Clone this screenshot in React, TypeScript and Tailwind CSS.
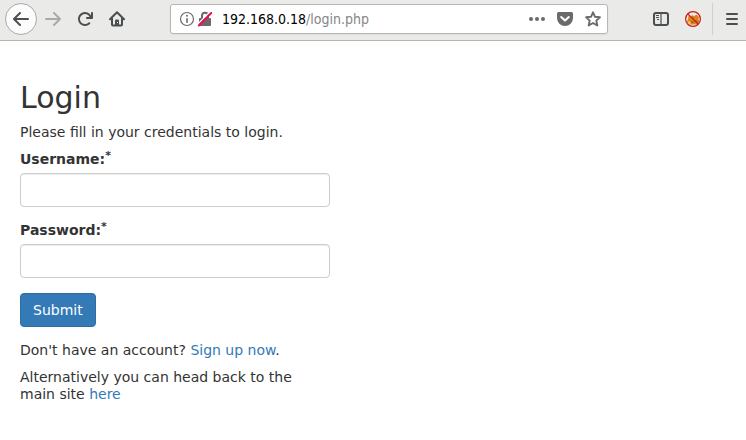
import type { ReactNode } from "react";

type IconProps = { children: ReactNode; className?: string };

function Icon({ children, className = "" }: IconProps) {
  return (
    <svg viewBox="0 0 16 16" width="16" height="16" fill="currentColor" aria-hidden="true" className={`shrink-0 ${className}`}>
      {children}
    </svg>
  );
}

type ToolButtonProps = { label: string; children: ReactNode; round?: boolean; disabled?: boolean };

function ToolButton({ label, children, round = false, disabled = false }: ToolButtonProps) {
  return (
    <button
      type="button"
      aria-label={label}
      disabled={disabled}
      className={`flex size-8 shrink-0 items-center justify-center ${
        round ? "rounded-full border border-[#a9a9a7] bg-[#fcfcfc]" : ""
      } ${disabled ? "text-[#a9abab]" : "text-[#4a4f51]"}`}
    >
      {children}
    </button>
  );
}

const BACK =
  "M15 7H3.414l4.293-4.293a1 1 0 0 0-1.414-1.414l-6 6a1 1 0 0 0 0 1.414l6 6a1 1 0 0 0 1.414-1.414L3.414 9H15a1 1 0 0 0 0-2z";

function Toolbar() {
  return (
    <header className="flex items-start border-b border-[#b4b4b2] bg-[#eaeae8] pb-[5px] pl-[5px] pt-[3px]">
      <ToolButton label="Back" round>
        <Icon><path d={BACK} /></Icon>
      </ToolButton>
      <ToolButton label="Forward" disabled>
        <Icon><path d={BACK} transform="matrix(-1 0 0 1 16 0)" /></Icon>
      </ToolButton>
      <ToolButton label="Reload">
        <Icon>
          <path d="M15 1a1 1 0 0 0-1 1v2.418A6.995 6.995 0 1 0 8 15a6.954 6.954 0 0 0 4.95-2.05 1 1 0 0 0-1.414-1.414A5.019 5.019 0 1 1 12.549 6H10a1 1 0 0 0 0 2h5a1 1 0 0 0 1-1V2a1 1 0 0 0-1-1z" />
        </Icon>
      </ToolButton>
      <ToolButton label="Home">
        <Icon>
          <path d="M1 8.2 8 1.3l7 6.9M3 7v6.500a1 1 0 0 0 1 1h8a1 1 0 0 0 1-1V7" fill="none" stroke="currentColor" strokeWidth="2" strokeLinecap="round" strokeLinejoin="round" />
          <path d="M6 14V9.500a1 1 0 0 1 1-1h2a1 1 0 0 1 1 1V14z" />
          <rect x="8" y="11" width="1" height="1" fill="#eaeae8" />
        </Icon>
      </ToolButton>

      <div className="ml-[37px] mt-px flex h-[30px] min-w-0 flex-1 items-center rounded-[3px] border border-[#b6b6b4] bg-white pl-2 pr-1.5 text-[#6a6a6a] shadow-xs">
        <button type="button" aria-label="Site information" className="flex items-center gap-0.5">
          <Icon>
            <circle cx="8" cy="8" r="6.500" fill="none" stroke="currentColor" strokeWidth="1.200" />
            <circle cx="8" cy="4.800" r="1" />
            <rect x="7.200" y="7" width="1.600" height="5" rx="0.800" />
          </Icon>
          <Icon>
            <path d="M5 8V4.800a3 3 0 0 1 6 0V8" fill="none" stroke="currentColor" strokeWidth="2" />
            <rect x="2" y="7" width="12" height="8" rx="1" />
            <path d="M1 13 13 1" stroke="#fff" strokeWidth="1.500" />
            <path d="M1.800 14.500 14.200 2" stroke="#ed0b50" strokeWidth="2" strokeLinecap="round" />
          </Icon>
        </button>
        <a href="#login" className="ml-[9px] min-w-0 flex-1 truncate font-['DejaVu_Sans_Condensed','DejaVu_Sans',sans-serif] text-[14px] leading-5 text-[#858585]">
          <span className="text-black">192.168.0.18</span>/login.php
        </a>
        <div className="flex items-center gap-3">
          <button type="button" aria-label="Page actions">
            <Icon>
              <circle cx="2" cy="8" r="2" />
              <circle cx="8" cy="8" r="2" />
              <circle cx="14" cy="8" r="2" />
            </Icon>
          </button>
          <button type="button" aria-label="Save to Pocket">
            <Icon>
              <path d="M1.600 1h12.800A1.600 1.600 0 0 1 16 2.600V7A8 8 0 0 1 0 7V2.600A1.600 1.600 0 0 1 1.600 1z" />
              <path d="m4.200 6 3.800 3.600L11.800 6" fill="none" stroke="#fff" strokeWidth="2" strokeLinecap="round" strokeLinejoin="round" />
            </Icon>
          </button>
          <button type="button" aria-label="Bookmark this page">
            <Icon>
              <path d="m8 1.300 2 4.500 4.900.5-3.600 3.300 1 4.900L8 12l-4.300 2.500 1-4.900L1.100 6.300 6 5.800z" fill="none" stroke="currentColor" strokeWidth="1.900" strokeLinejoin="round" />
            </Icon>
          </button>
        </div>
      </div>

      <div className="ml-[37px] flex">
        <ToolButton label="Sidebars">
          <Icon>
            <rect x="1" y="2" width="14" height="12" rx="2" fill="none" stroke="currentColor" strokeWidth="2" />
            <path d="M8 2v12" stroke="currentColor" strokeWidth="1.200" />
            <path d="M3 4.500h3M3 6.500h3M4 8.500h2" stroke="currentColor" strokeWidth="1" />
          </Icon>
        </ToolButton>
        <ToolButton label="Proxy disabled">
          <Icon>
            <path d="M1.500 11 3 8.500 3.500 4.500l2.500 1L7.500 4 9 5.200 11.500 3.500 14 6l-.5 2 1 3-2.500 2.500H5z" fill="#dc8418" />
            <path d="m6 10.500 2 1 2-2 2.500 1M7.500 6.500l1.500 1" fill="none" stroke="#8a5216" strokeWidth="1" />
            <path d="m2.500 11 2-1 1.500 2.500-2 .5z" fill="#f4c879" />
            <circle cx="8" cy="8" r="7.400" fill="none" stroke="#cf1717" strokeWidth="1.200" />
            <path d="m2.800 2.800 10.400 10.400" stroke="#cf1717" strokeWidth="1.200" />
          </Icon>
        </ToolButton>
      </div>
      <div className="ml-[3px] flex border-l border-[#d0d0ce] pl-[3px] -mr-0.5">
        <ToolButton label="Open menu">
          <Icon>
            <path d="M3 3h10M3 8h10M3 13h10" stroke="currentColor" strokeWidth="2" strokeLinecap="round" />
          </Icon>
        </ToolButton>
      </div>
    </header>
  );
}

function Field({ id, label, type }: { id: string; label: string; type: string }) {
  return (
    <div className="mb-[15px]">
      <label htmlFor={id} className="mb-[5px] block font-bold">
        {label}
        <sup className="text-[11px]">*</sup>
      </label>
      <input
        id={id}
        name={id}
        type={type}
        className="block h-[34px] w-full rounded-[4px] border border-[#ccc] bg-white px-3 text-[#555] shadow-[inset_0_1px_1px_rgba(0,0,0,0.075)] outline-none"
      />
    </div>
  );
}

export default function App() {
  return (
    <div className="min-h-screen overflow-x-hidden bg-white font-['DejaVu_Sans',sans-serif] text-[14px] leading-[17px] text-[#333]">
      <Toolbar />
      <main className="max-w-[350px] px-5 pb-5 pt-10">
        <h1 className="mb-2.5 text-[30px] leading-[33px]">Login</h1>
        <p className="mb-2.5">Please fill in your credentials to login.</p>
        <form onSubmit={(event) => event.preventDefault()}>
          <Field id="username" label="Username:" type="text" />
          <Field id="password" label="Password:" type="password" />
          <button type="submit" className="mb-[15px] block h-[34px] rounded-[4px] border border-[#2e6da4] bg-[#337ab7] px-3 text-white">
            Submit
          </button>
          <p className="mb-2.5">
            Don't have an account? <a href="#register" className="text-[#337ab7]">Sign up now</a>.
          </p>
          <p>
            Alternatively you can head back to the main site <a href="#main" className="text-[#337ab7]">here</a>
          </p>
        </form>
      </main>
    </div>
  );
}
